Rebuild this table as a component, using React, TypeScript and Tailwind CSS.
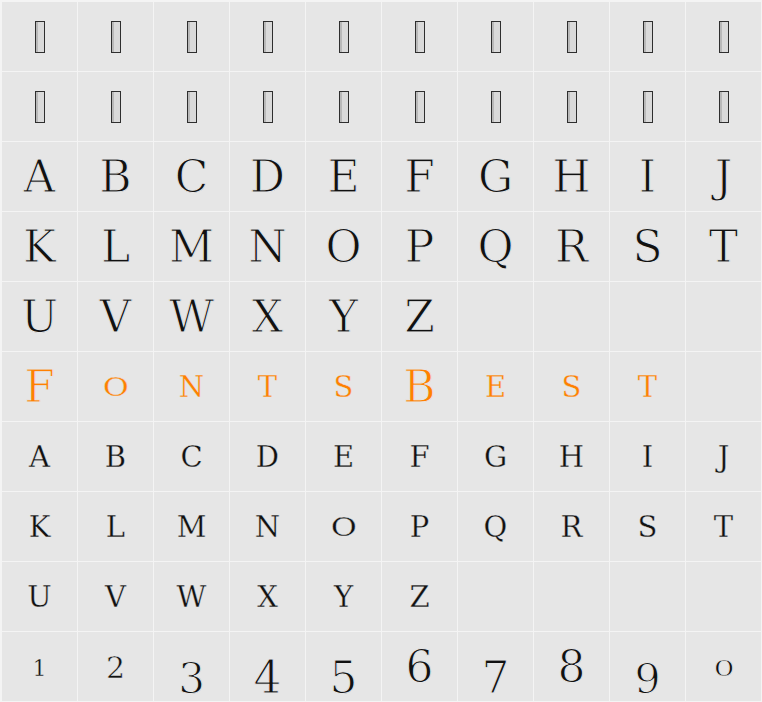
import React from "react";

type Kind = "tofu" | "big" | "small" | "digit" | "empty";

interface Cell {
  ch?: string;
  kind: Kind;
  orange?: boolean;
  cls?: string;
}

const big = (s: string): Cell[] => s.split("").map((ch) => ({ ch, kind: "big" }));
const small = (s: string): Cell[] => s.split("").map((ch) => ({ ch, kind: "small" }));
const empty = (n: number): Cell[] => Array.from({ length: n }, () => ({ kind: "empty" }));
const tofu: Cell[] = Array.from({ length: 10 }, () => ({ kind: "tofu" }));

// old-style figures: each digit sits at its own height
const digits: Cell[] = [
  { ch: "1", kind: "digit", cls: "text-[22px] translate-y-[2px] [-webkit-text-stroke:0.3px_#e6e6e6]" },
  { ch: "2", kind: "digit", cls: "text-[30px] translate-y-[1px] [-webkit-text-stroke:0.5px_#e6e6e6]" },
  { ch: "3", kind: "digit", cls: "text-[42px] translate-y-[12px] [-webkit-text-stroke:1px_#e6e6e6]" },
  { ch: "4", kind: "digit", cls: "text-[44px] translate-y-[12px] [-webkit-text-stroke:1px_#e6e6e6]" },
  { ch: "5", kind: "digit", cls: "text-[44px] translate-y-[12px] [-webkit-text-stroke:1px_#e6e6e6]" },
  { ch: "6", kind: "digit", cls: "text-[44px] translate-y-[1px] [-webkit-text-stroke:1px_#e6e6e6]" },
  { ch: "7", kind: "digit", cls: "text-[44px] translate-y-[12px] [-webkit-text-stroke:1px_#e6e6e6]" },
  { ch: "8", kind: "digit", cls: "text-[44px] translate-y-[1px] [-webkit-text-stroke:1px_#e6e6e6]" },
  { ch: "9", kind: "digit", cls: "text-[41px] translate-y-[13px] [-webkit-text-stroke:1px_#e6e6e6]" },
  { ch: "0", kind: "digit", cls: "text-[22px] translate-y-[2px] scale-x-[1.55] [-webkit-text-stroke:0.7px_#e6e6e6]" },
];

const brand: Cell[] = [
  { ch: "F", kind: "big", orange: true },
  { ch: "O", kind: "small", orange: true },
  { ch: "N", kind: "small", orange: true },
  { ch: "T", kind: "small", orange: true },
  { ch: "S", kind: "small", orange: true },
  { ch: "B", kind: "big", orange: true },
  { ch: "E", kind: "small", orange: true },
  { ch: "S", kind: "small", orange: true },
  { ch: "T", kind: "small", orange: true },
  { kind: "empty" },
];

const cells: Cell[] = [
  ...tofu,
  ...tofu,
  ...big("ABCDEFGHIJ"),
  ...big("KLMNOPQRST"),
  ...big("UVWXYZ"),
  ...empty(4),
  ...brand,
  ...small("ABCDEFGHIJ"),
  ...small("KLMNOPQRST"),
  ...small("UVWXYZ"),
  ...empty(4),
  ...digits,
];

function Glyph({ cell }: { cell: Cell }) {
  if (cell.kind === "empty") return null;
  if (cell.kind === "tofu") {
    return <div className="w-[10px] h-[32px] border-[1.5px] border-[#2e2e2e] bg-[#dadada] shadow-[inset_2px_0_0_#b9b9b9]" />;
  }
  const color = cell.orange ? "text-[#ff8000]" : "text-[#111]";
  const isO = cell.ch === "O";
  let size = "";
  // DejaVu Serif is heavier than the specimen, a stroke in the cell colour thins it a bit
  if (cell.kind === "big") size = "text-[44px] translate-y-[1px] [-webkit-text-stroke:1px_#e6e6e6]";
  if (cell.kind === "small")
    size = isO
      ? "text-[29px] translate-y-[1px] scale-x-[1.1] scale-y-[0.9] [-webkit-text-stroke:0.4px_#e6e6e6]"
      : "text-[29px] translate-y-[1px] [-webkit-text-stroke:0.3px_#e6e6e6]";
  if (cell.kind === "digit") size = cell.cls ?? "";
  return <span className={`block leading-[0.7] ${color} ${size}`}>{cell.ch}</span>;
}

export default function App() {
  return (
    <div className="w-[762px] h-[702px] bg-[#f4f4f4] pt-[2px] pl-[2px] overflow-hidden font-['DejaVu_Serif',serif]">
      <div className="grid grid-cols-[repeat(10,75px)] grid-rows-[repeat(10,69px)] gap-px">
        {cells.map((cell, i) => (
          <div key={i} className="bg-[#e6e6e6] flex items-center justify-center">
            <Glyph cell={cell} />
          </div>
        ))}
      </div>
    </div>
  );
}
